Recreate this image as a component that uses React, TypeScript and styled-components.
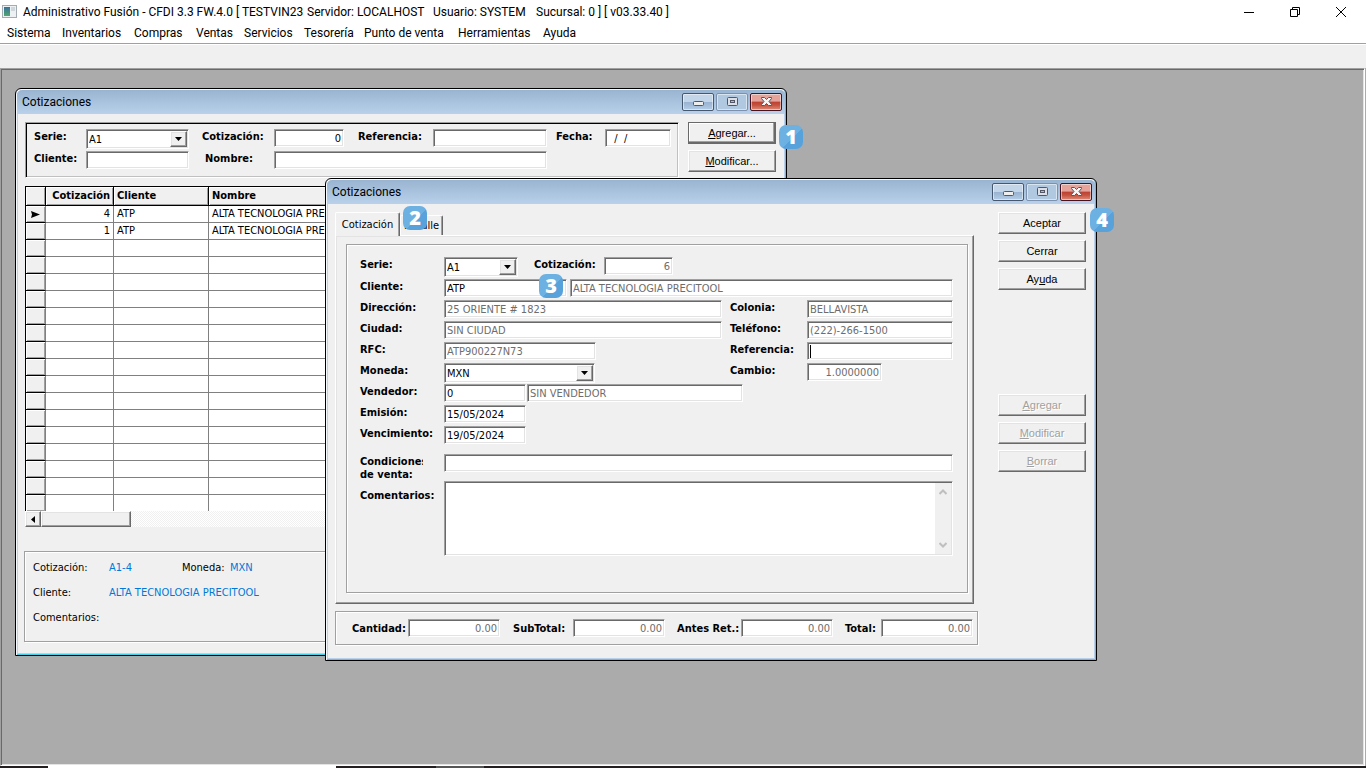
import React, { useEffect, useRef } from 'react';
import styled, { createGlobalStyle, css } from 'styled-components';

const ui = `Roboto, "Open Sans", sans-serif`;
const form = `"DejaVu Sans Condensed", "DejaVu Sans", sans-serif`;
const face = '#f0f0f0';

const Global = createGlobalStyle`
  *, *::before, *::after { box-sizing: border-box; }
  body { margin: 0; background: #ababab; color: #000; font: 11px/14px ${form}; }
  button, input, select, textarea { font: inherit; color: inherit; margin: 0; border-radius: 0; outline: none; }
`;

const sunken = css`
  border: 1px solid;
  border-color: #a0a0a0 #fff #fff #a0a0a0;
  box-shadow: inset 1px 1px #696969, inset -1px -1px #e3e3e3;
`;
const raised = css`
  border: 1px solid;
  border-color: #fff #696969 #696969 #fff;
  box-shadow: inset -1px -1px #a0a0a0, inset 1px 1px #e3e3e3;
`;
const etched = css`
  border: 1px solid #a0a0a0;
  box-shadow: 1px 1px #fff, inset 1px 1px #fff;
`;

/* ---------- application shell ---------- */
const Shell = styled.div`
  display: flex;
  flex-direction: column;
  min-height: 100vh;
`;
const AppTitle = styled.header`
  display: flex;
  align-items: center;
  height: 23px;
  padding: 0 2px;
  background: #fff;
  font: 12px/16px ${ui};
  white-space: pre;
`;
const AppName = styled.h1`
  display: flex;
  flex: 1;
  margin: 0 0 0 6px;
  font: inherit;
`;
const Info = styled.span<{ $w: number }>`
  flex: 0 0 ${p => p.$w}px;
`;
const SysButton = styled.button`
  display: flex;
  justify-content: center;
  width: 46px;
  padding: 0;
  border: 0;
  background: none;
`;
const MenuBar = styled.nav`
  display: flex;
  height: 20px;
  padding-left: 7px;
  background: #fff;
  font: 12px/20px ${ui};
`;
const MenuLink = styled.a<{ $w: number }>`
  flex: 0 0 ${p => p.$w}px;
  color: inherit;
  text-decoration: none;
  white-space: nowrap;
`;
const ToolStrip = styled.div`
  height: 25px;
  border-top: 1px solid #a0a0a0;
  box-shadow: inset 0 1px #fff;
  background: ${face};
`;
const Workspace = styled.main`
  position: relative;
  flex: 1;
  min-height: 620px;
  margin-right: 1px;
  background: #ababab;
  ${sunken}
`;
const Taskbar = styled.footer`
  display: flex;
  height: 2px;
  padding-left: 48px;
  background: #231f20;
`;
const Task = styled.span<{ $w: number; $gap?: number; $c: string }>`
  width: ${p => p.$w}px;
  margin-right: ${p => p.$gap || 0}px;
  background: ${p => p.$c};
`;

/* ---------- child windows ---------- */
const Win = styled.section<{ $x: number; $y: number; $h: number }>`
  position: absolute;
  left: ${p => p.$x}px;
  top: ${p => p.$y}px;
  display: flex;
  flex-direction: column;
  width: 772px;
  min-height: ${p => p.$h}px;
  border: 1px solid #000;
  border-radius: 6px 6px 0 0;
  background: ${face};
  box-shadow: inset 1px 1px #f4f9fd, inset -1px -1px #3fd0ea, inset 2px 0 #b9d1ea, inset -2px -2px #b9d1ea;
`;
const Caption = styled.header`
  display: flex;
  align-items: center;
  height: 24px;
  margin: 1px 1px 0;
  padding: 0 3px 0 5px;
  border-radius: 5px 5px 0 0;
  background: linear-gradient(#99b4d1, #b9d1ea);
`;
const CaptionText = styled.h2`
  flex: 1;
  margin: 0;
  font: 12px/16px ${ui};
`;
const CaptionButton = styled.button<{ $kind: 'normal' | 'dim' | 'close' }>`
  display: flex;
  align-items: center;
  justify-content: center;
  width: 32px;
  height: 18px;
  margin-left: 2px;
  padding: 0 0 2px;
  border: 1px solid #46586f;
  border-radius: 2px;
  background: linear-gradient(#c3d5e9 0 50%, #98b2cf 50%, #b4cde8);
  box-shadow: inset 0 0 0 1px #ffffff80;
  ${p => p.$kind === 'dim' && css`
    border-color: #7c91ad;
    background: #b1c8e1;
  `}
  ${p => p.$kind === 'close' && css`
    border-color: #431422;
    background: linear-gradient(#e5a399 0 45%, #bd4031 50%, #c4543f 70%, #df8d7c);
  `}
`;

const Button = styled.button<{ $default?: boolean }>`
  height: 22px;
  padding: 0;
  background: ${face};
  ${raised}
  font: 11px/14px "Liberation Sans", sans-serif;
  &:disabled { color: #a0a0a0; text-shadow: 1px 1px #fff; }
  ${p => p.$default && css`
    border: 1px solid #696969;
    box-shadow: inset -1px -1px #696969, inset -2px -2px #a0a0a0, inset 1px 1px #fff;
  `}
`;
const ButtonColumn = styled.div`
  display: flex;
  flex-direction: column;
  flex: 0 0 88px;
  gap: 6px;
`;
const ButtonGap = styled.div`
  height: 92px;
`;

/* ---------- form parts ---------- */
const Row = styled.div<{ $h?: number }>`
  display: flex;
  align-items: flex-start;
  height: ${p => p.$h || 21}px;
`;
const Label = styled.label<{ $w: number; $ml?: number }>`
  flex: 0 0 ${p => p.$w}px;
  margin-left: ${p => p.$ml || 0}px;
  padding-top: 1px;
  font-weight: bold;
  white-space: nowrap;
`;
const Field = styled.input<{ $w?: number; $ml?: number; $right?: boolean; $caret?: boolean }>`
  flex: ${p => (p.$w ? `0 0 ${p.$w}px` : '1')};
  min-width: 0;
  height: 18px;
  width: ${p => (p.$w ? `${p.$w}px` : 'auto')};
  margin-left: ${p => p.$ml || 0}px;
  padding: 1px 2px 0;
  background: #fff;
  text-align: ${p => (p.$right ? 'right' : 'left')};
  ${sunken}
  &:read-only { color: #6d6d6d; }
  ${p => p.$caret && css`
    caret-color: transparent;
    background: linear-gradient(#000, #000) 2px 2px / 1px 13px no-repeat #fff;
  `}
`;
const ComboBox = styled.span<{ $w: number }>`
  display: grid;
  flex: 0 0 ${p => p.$w}px;
  height: 20px;
  padding: 1px;
  background: #fff;
  ${sunken}
  > * { grid-area: 1 / 1; }
`;
const Choice = styled.select`
  appearance: none;
  border: 0;
  padding: 1px 0 0 1px;
  background: #fff;
`;
const Arrow = styled.span`
  display: flex;
  align-items: center;
  justify-content: center;
  justify-self: end;
  width: 17px;
  background: ${face};
  pointer-events: none;
  ${raised}
`;

/* ---------- list window ---------- */
const ListBody = styled.div`
  display: flex;
  flex: 1;
  flex-direction: column;
  padding: 8px 10px 13px 8px;
`;
const TopBar = styled.div`
  display: flex;
  gap: 9px;
  margin-left: 1px;
`;
const Search = styled.form`
  flex: 1;
  height: 56px;
  padding: 6px 7px;
  border: 1px solid;
  border-color: #a0a0a0 #fff #fff #a0a0a0;
  box-shadow: inset 1px 1px #000, inset -1px -1px #c0c0c0;
`;
const Grid = styled.table`
  width: 100%;
  margin: 8px 0 0 1px;
  border-collapse: separate;
  border-spacing: 0;
  table-layout: fixed;
  background: #fff;
  border-left: 1px solid #000;
`;
const Head = styled.th<{ $w?: number; $right?: boolean }>`
  width: ${p => (p.$w ? `${p.$w}px` : 'auto')};
  height: 20px;
  padding: 0 3px;
  border: 1px solid #000;
  border-left: 0;
  background: ${face};
  box-shadow: inset 1px 1px #fff, inset -1px -1px #a0a0a0;
  text-align: ${p => (p.$right ? 'right' : 'left')};
`;
const GridRow = styled.tr`
  &:last-child > td {
    height: 16px;
    border-bottom: 0;
  }
`;
const Cell = styled.td<{ $right?: boolean }>`
  height: 17px;
  padding: 0 3px;
  border: solid #808080;
  border-width: 0 1px 1px 0;
  line-height: 14px;
  text-align: ${p => (p.$right ? 'right' : 'left')};
`;
const Selector = styled.td`
  height: 17px;
  padding: 0 0 0 5px;
  border: solid;
  border-width: 0 1px 1px 0;
  border-color: #808080 #808080 #000;
  background: ${face};
  box-shadow: inset 1px 1px #fff, inset -1px -1px #a0a0a0;
  line-height: 0;
`;
const ScrollTrack = styled.div`
  display: flex;
  height: 16px;
  margin-left: 1px;
  background: repeating-conic-gradient(#fff 0 25%, #f0f0f0 0 50%) 0 0 / 2px 2px;
`;
const ScrollPart = styled.button<{ $w: number }>`
  display: flex;
  align-items: center;
  justify-content: center;
  width: ${p => p.$w}px;
  padding: 0;
  background: ${face};
  ${raised}
`;
const Summary = styled.dl`
  display: flex;
  flex-direction: column;
  gap: 11px;
  height: 91px;
  margin: auto 0 0;
  padding: 9px 8px;
  ${etched}
`;
const SummaryLine = styled.div`
  display: flex;
`;
const Term = styled.dt<{ $w: number }>`
  flex: 0 0 ${p => p.$w}px;
`;
const Value = styled.dd<{ $w?: number }>`
  width: ${p => (p.$w ? `${p.$w}px` : 'auto')};
  margin: 0;
  color: #0078d7;
`;

/* ---------- edit window ---------- */
const EditBody = styled.div`
  display: flex;
  flex: 1;
  gap: 20px;
  padding: 8px 10px 15px 9px;
`;
const EditMain = styled.div`
  flex: 1;
  min-width: 0;
`;
const Tabs = styled.div`
  display: flex;
  align-items: flex-end;
  height: 23px;
`;
const Tab = styled.button<{ $active?: boolean; $w: number }>`
  width: ${p => p.$w}px;
  height: ${p => (p.$active ? 24 : 20)}px;
  margin-bottom: ${p => (p.$active ? -1 : 0)}px;
  padding: 0;
  border: 1px solid;
  border-color: #fff #696969 transparent #fff;
  border-bottom: 0;
  border-radius: 2px 2px 0 0;
  background: ${face};
  box-shadow: inset -1px 0 #a0a0a0;
`;
const TabPanel = styled.div`
  height: 369px;
  margin-right: 4px;
  padding: 8px 5px 10px 10px;
  ${raised}
`;
const Fields = styled.form`
  height: 349px;
  padding: 12px 14px 12px 13px;
  ${etched}
`;
const LongLabel = styled(Label)`
  flex: 0 0 63px;
  margin-right: 21px;
  overflow: hidden;
  line-height: 13px;
`;
const TallLabel = styled(Label)`
  padding-top: 8px;
`;
const MemoBox = styled.span`
  display: flex;
  flex: 1;
  height: 75px;
  padding: 1px;
  background: #fff;
  ${sunken}
`;
const Memo = styled.textarea`
  flex: 1;
  border: 0;
  padding: 0;
  resize: none;
  background: #fff;
`;
const MemoScroll = styled.span`
  display: flex;
  flex-direction: column;
  align-items: center;
  justify-content: space-between;
  width: 16px;
  padding: 6px 0;
  background: ${face};
`;
const Totals = styled.div`
  display: flex;
  align-items: center;
  height: 34px;
  margin-top: 7px;
  padding: 0 4px 0 16px;
  ${etched}
`;

/* ---------- step badges ---------- */
const Step = styled.span<{ $x: number; $y: number }>`
  position: absolute;
  z-index: 1;
  left: ${p => p.$x}px;
  top: ${p => p.$y}px;
  width: 24px;
  height: 24px;
  border-radius: 7px;
  background: linear-gradient(135deg, #6db1e2 0 55%, #57a2db 55%);
  color: #fff;
  font: 800 20px/23px "Open Sans", sans-serif;
  text-align: center;
`;

const DownArrow = () => (
  <Arrow><svg width="7" height="4"><path d="M0 0h7L3.5 4z" /></svg></Arrow>
);

const Combo = ({ id, value, w }: { id: string; value: string; w: number }) => (
  <ComboBox $w={w}>
    <Choice id={id} defaultValue={value}><option>{value}</option></Choice>
    <DownArrow />
  </ComboBox>
);

const WindowCaption = ({ title }: { title: string }) => (
  <Caption>
    <CaptionText>{title}</CaptionText>
    <CaptionButton type="button" $kind="normal" aria-label="Minimizar">
      <svg width="11" height="9"><rect x=".5" y="4.5" width="10" height="4" rx="1" fill="#eee" stroke="#535666" /></svg>
    </CaptionButton>
    <CaptionButton type="button" $kind="dim" aria-label="Maximizar">
      <svg width="11" height="9">
        <rect x=".5" y=".5" width="10" height="8" rx="1" fill="#dbe0e8" stroke="#535666" />
        <rect x="3.5" y="3.5" width="4" height="2" fill="#a9bdd5" stroke="#535666" />
      </svg>
    </CaptionButton>
    <CaptionButton type="button" $kind="close" aria-label="Cerrar">
      <svg width="11" height="9">
        <path d="M.5.5h3l2 2 2-2h3v1l-2.5 3 2.5 3v1h-3l-2-2-2 2h-3v-1l2.5-3-2.5-3z" fill="#f6f6f6" stroke="#535666" />
      </svg>
    </CaptionButton>
  </Caption>
);

const menus: [string, number][] = [
  ['Sistema', 55], ['Inventarios', 72], ['Compras', 62], ['Ventas', 48], ['Servicios', 60],
  ['Tesorería', 60], ['Punto de venta', 94], ['Herramientas', 85], ['Ayuda', 60],
];

const quotes = [
  { id: '4', client: 'ATP', name: 'ALTA TECNOLOGIA PRECITOOL' },
  { id: '1', client: 'ATP', name: 'ALTA TECNOLOGIA PRECITOOL' },
];
const lines = Array.from({ length: 18 }, (_, i) => quotes[i]);

const ListWindow = () => (
  <Win $x={14} $y={19} $h={568}>
    <WindowCaption title="Cotizaciones" />
    <ListBody>
      <TopBar>
        <Search>
          <Row $h={22}>
            <Label $w={52} $ml={1} htmlFor="s-serie">Serie:</Label>
            <Combo id="s-serie" value="A1" w={103} />
            <Label $w={72} $ml={13} htmlFor="s-cot">Cotización:</Label>
            <Field id="s-cot" $w={70} $right defaultValue="0" />
            <Label $w={75} $ml={14} htmlFor="s-ref">Referencia:</Label>
            <Field id="s-ref" $w={114} />
            <Label $w={49} $ml={9} htmlFor="s-fecha">Fecha:</Label>
            <Field id="s-fecha" $w={66} defaultValue={'\u00a0\u00a0/\u00a0 /'} />
          </Row>
          <Row>
            <Label $w={52} $ml={1} htmlFor="s-cli">Cliente:</Label>
            <Field id="s-cli" $w={103} />
            <Label $w={69} $ml={16} htmlFor="s-nom">Nombre:</Label>
            <Field id="s-nom" $w={273} />
          </Row>
        </Search>
        <ButtonColumn>
          <Button type="button" $default><u>A</u>gregar...</Button>
          <Button type="button"><u>M</u>odificar...</Button>
        </ButtonColumn>
      </TopBar>
      <Grid>
        <thead>
          <tr>
            <Head $w={20} aria-label="Selección" />
            <Head $w={68} $right>Cotización</Head>
            <Head $w={95}>Cliente</Head>
            <Head>Nombre</Head>
          </tr>
        </thead>
        <tbody>
          {lines.map((q, i) => (
            <GridRow key={i}>
              <Selector>
                {i === 0 && <svg width="9" height="7"><path d="M0 0l9 3.5L0 7 1 3.5z" /></svg>}
              </Selector>
              <Cell $right>{q?.id}</Cell>
              <Cell>{q?.client}</Cell>
              <Cell>{q?.name}</Cell>
            </GridRow>
          ))}
        </tbody>
      </Grid>
      <ScrollTrack>
        <ScrollPart type="button" $w={16} aria-label="Desplazar a la izquierda">
          <svg width="4" height="7"><path d="M4 0v7L0 3.5z" /></svg>
        </ScrollPart>
        <ScrollPart type="button" $w={90} aria-label="Barra de desplazamiento" />
      </ScrollTrack>
      <Summary>
        <SummaryLine>
          <Term $w={76}>Cotización:</Term>
          <Value $w={73}>A1-4</Value>
          <Term $w={48}>Moneda:</Term>
          <Value>MXN</Value>
        </SummaryLine>
        <SummaryLine>
          <Term $w={76}>Cliente:</Term>
          <Value>ALTA TECNOLOGIA PRECITOOL</Value>
        </SummaryLine>
        <SummaryLine>
          <Term $w={76}>Comentarios:</Term>
        </SummaryLine>
      </Summary>
    </ListBody>
  </Win>
);

const EditWindow = () => {
  const ref = useRef<HTMLInputElement>(null);
  useEffect(() => ref.current?.focus(), []);
  return (
    <Win $x={324} $y={109} $h={483}>
      <WindowCaption title="Cotizaciones" />
      <EditBody>
        <EditMain>
          <Tabs role="tablist">
            <Tab role="tab" type="button" $active $w={65}>Cotización</Tab>
            <Tab role="tab" type="button" $w={43}>Detalle</Tab>
          </Tabs>
          <TabPanel role="tabpanel">
            <Fields>
              <Row $h={22}>
                <Label $w={84} htmlFor="serie">Serie:</Label>
                <Combo id="serie" value="A1" w={74} />
                <Label $w={70} $ml={16} htmlFor="cot">Cotización:</Label>
                <Field id="cot" $w={69} $right readOnly defaultValue="6" />
              </Row>
              <Row>
                <Label $w={84} htmlFor="cliente">Cliente:</Label>
                <Field id="cliente" $w={123} defaultValue="ATP" />
                <Field $ml={3} aria-label="Nombre del cliente" readOnly defaultValue="ALTA TECNOLOGIA PRECITOOL" />
              </Row>
              <Row>
                <Label $w={84} htmlFor="dir">Dirección:</Label>
                <Field id="dir" readOnly defaultValue="25 ORIENTE # 1823" />
                <Label $w={77} $ml={8} htmlFor="colonia">Colonia:</Label>
                <Field id="colonia" $w={146} readOnly defaultValue="BELLAVISTA" />
              </Row>
              <Row>
                <Label $w={84} htmlFor="ciudad">Ciudad:</Label>
                <Field id="ciudad" readOnly defaultValue="SIN CIUDAD" />
                <Label $w={77} $ml={8} htmlFor="tel">Teléfono:</Label>
                <Field id="tel" $w={146} readOnly defaultValue="(222)-266-1500" />
              </Row>
              <Row>
                <Label $w={84} htmlFor="rfc">RFC:</Label>
                <Field id="rfc" $w={152} readOnly defaultValue="ATP900227N73" />
                <Label $w={77} $ml={134} htmlFor="ref">Referencia:</Label>
                <Field id="ref" ref={ref} $w={146} $caret />
              </Row>
              <Row>
                <Label $w={84} htmlFor="moneda">Moneda:</Label>
                <Combo id="moneda" value="MXN" w={151} />
                <Label $w={77} $ml={135} htmlFor="cambio">Cambio:</Label>
                <Field id="cambio" $w={75} $right readOnly defaultValue="1.0000000" />
              </Row>
              <Row>
                <Label $w={84} htmlFor="vend">Vendedor:</Label>
                <Field id="vend" $w={82} defaultValue="0" />
                <Field $w={216} $ml={1} aria-label="Nombre del vendedor" readOnly defaultValue="SIN VENDEDOR" />
              </Row>
              <Row>
                <Label $w={84} htmlFor="emi">Emisión:</Label>
                <Field id="emi" $w={82} defaultValue="15/05/2024" />
              </Row>
              <Row $h={28}>
                <Label $w={84} htmlFor="venc">Vencimiento:</Label>
                <Field id="venc" $w={82} defaultValue="19/05/2024" />
              </Row>
              <Row $h={27}>
                <LongLabel $w={63} htmlFor="cond">Condiciones<br />de venta:</LongLabel>
                <Field id="cond" />
              </Row>
              <Row $h={75}>
                <TallLabel $w={84} htmlFor="com">Comentarios:</TallLabel>
                <MemoBox>
                  <Memo id="com" />
                  <MemoScroll aria-hidden>
                    <svg width="8" height="6"><path d="M.5 5L4 1.5 7.5 5" fill="none" stroke="#bfbfbf" strokeWidth="2" /></svg>
                    <svg width="8" height="6"><path d="M.5 1L4 4.5 7.5 1" fill="none" stroke="#bfbfbf" strokeWidth="2" /></svg>
                  </MemoScroll>
                </MemoBox>
              </Row>
            </Fields>
          </TabPanel>
          <Totals>
            <Label $w={56} htmlFor="cant">Cantidad:</Label>
            <Field id="cant" $w={92} $right readOnly defaultValue="0.00" />
            <Label $w={60} $ml={13} htmlFor="sub">SubTotal:</Label>
            <Field id="sub" $w={92} $right readOnly defaultValue="0.00" />
            <Label $w={64} $ml={12} htmlFor="ret">Antes Ret.:</Label>
            <Field id="ret" $w={92} $right readOnly defaultValue="0.00" />
            <Label $w={36} $ml={12} htmlFor="total">Total:</Label>
            <Field id="total" $right readOnly defaultValue="0.00" />
          </Totals>
        </EditMain>
        <ButtonColumn>
          <Button type="button">Aceptar</Button>
          <Button type="button">Cerrar</Button>
          <Button type="button">Ay<u>u</u>da</Button>
          <ButtonGap />
          <Button type="button" disabled><u>A</u>gregar</Button>
          <Button type="button" disabled><u>M</u>odificar</Button>
          <Button type="button" disabled><u>B</u>orrar</Button>
        </ButtonColumn>
      </EditBody>
    </Win>
  );
};

export default function App() {
  return (
    <Shell>
      <Global />
      <AppTitle>
        <svg width="15" height="13">
          <defs>
            <linearGradient id="app-icon" x2="0" y2="1">
              <stop stopColor="#3a6f9e" /><stop offset="1" stopColor="#4fa86b" />
            </linearGradient>
          </defs>
          <rect x=".5" y=".5" width="14" height="12" fill="#eef1f4" stroke="#a3abb3" />
          <rect x="2" y="2" width="6" height="9" fill="url(#app-icon)" />
          <rect x="9" y="2" width="4" height="4" fill="#cfd6dc" />
        </svg>
        <AppName>
          <Info $w={284}>Administrativo Fusión - CFDI 3.3 FW.4.0 [ TESTVIN23</Info>
          <Info $w={126}>Servidor: LOCALHOST</Info>
          <Info $w={103}>Usuario: SYSTEM</Info>
          <Info $w={140}>Sucursal: 0 ] [ v03.33.40 ]</Info>
        </AppName>
        <SysButton type="button" aria-label="Minimizar">
          <svg width="10" height="10"><path d="M0 5.5h10" stroke="#000" /></svg>
        </SysButton>
        <SysButton type="button" aria-label="Restaurar">
          <svg width="10" height="10"><path d="M.5 2.5h7v7h-7zM2.5 2V.5h7v7H8" fill="none" stroke="#000" /></svg>
        </SysButton>
        <SysButton type="button" aria-label="Cerrar">
          <svg width="10" height="10"><path d="M0 0l10 10M10 0L0 10" stroke="#000" /></svg>
        </SysButton>
      </AppTitle>
      <MenuBar>
        {menus.map(([name, w]) => <MenuLink key={name} href="#" $w={w}>{name}</MenuLink>)}
      </MenuBar>
      <ToolStrip />
      <Workspace>
        <ListWindow />
        <EditWindow />
        <Step $x={778} $y={56}>1</Step>
        <Step $x={402} $y={137}>2</Step>
        <Step $x={538} $y={205}>3</Step>
        <Step $x={1089} $y={139}>4</Step>
      </Workspace>
      <Taskbar>
        <Task $w={288} $gap={100} $c="#fff" />
        <Task $w={48} $c="#555" />
      </Taskbar>
    </Shell>
  );
}
